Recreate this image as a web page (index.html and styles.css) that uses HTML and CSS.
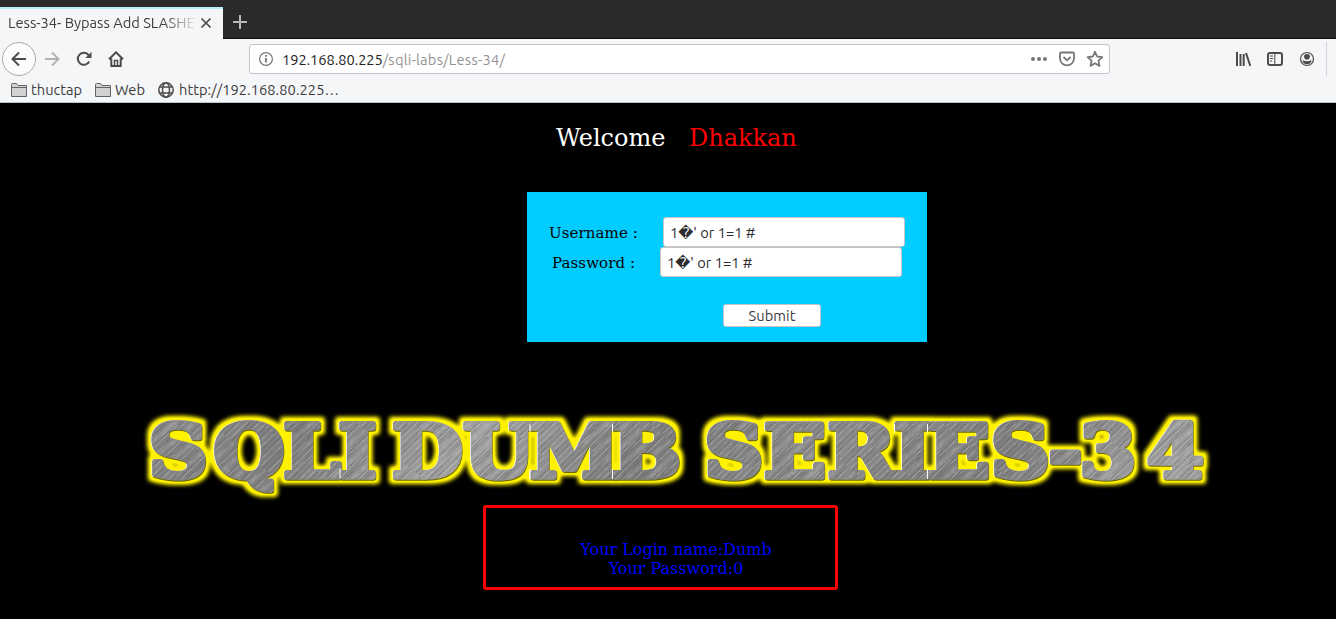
FILE: index.html
```html
<!DOCTYPE html>
<html lang="en">
<head>
<meta charset="utf-8">
<title>Less-34- Bypass Add SLASHES</title>
<link rel="stylesheet" href="styles.css">
</head>
<body>
<header class="browser">
  <div class="tabs">
    <div class="tab"><span class="tab-title">Less-34- Bypass Add SLASHE</span>
      <svg class="close" width="12" height="12" viewBox="0 0 12 12"><path d="M1.500 1.500l9 9M10.500 1.500l-9 9" stroke="#4a4a4c" stroke-width="1.700"/></svg>
    </div>
    <svg class="plus" width="16" height="16" viewBox="0 0 16 16"><path d="M8 1v14M1 8h14" stroke="#b9b8b9" stroke-width="2"/></svg>
  </div>
  <div class="toolbar">
    <div class="nav">
      <span class="back"><svg width="16" height="16" viewBox="0 0 16 16"><path d="M15 8H2M8 1.500L1.500 8 8 14.500" class="line"/></svg></span>
      <svg class="forward" width="16" height="16" viewBox="0 0 16 16"><path d="M1 8h13M8 1.500L14.500 8 8 14.500" class="line"/></svg>
      <svg class="reload" width="16" height="16" viewBox="0 0 16 16"><path d="M13.200 10.500A6 6 0 1 1 12.600 4.200" class="line"/><path d="M15.500 0.800V7H9.300z" fill="#4c4c4e"/></svg>
      <svg class="home" width="16" height="16" viewBox="0 0 16 16"><path d="M1 8.300L8 1.300l7 7M3.300 7.500V15h9.400V7.500" class="line"/><path d="M6.500 14.500V9.500h3v5" fill="none" stroke="#4c4c4e" stroke-width="1.500"/></svg>
    </div>
    <div class="address">
      <svg width="16" height="16" viewBox="0 0 16 16"><circle cx="8" cy="8" r="6.400" fill="none" stroke="#77777a" stroke-width="1.200"/><path d="M8 7v4.500M8 4v1.700" stroke="#77777a" stroke-width="1.800"/></svg>
      <span class="url"><span class="host">192.168.80.225</span>/sqli-labs/Less-34/</span>
      <svg class="dots" width="18" height="16" viewBox="0 0 18 16" fill="#77777a"><circle cx="3" cy="8" r="2"/><circle cx="9" cy="8" r="2"/><circle cx="15" cy="8" r="2"/></svg>
      <svg class="pocket" width="16" height="16" viewBox="0 0 16 16"><path d="M2.200 1.500h11.600q1.200 0 1.200 1.200V7.500a7 6.800 0 0 1-14 0V2.700q0-1.200 1.200-1.200z" class="soft"/><path d="M4.500 6L8 9.300 11.500 6" class="soft"/></svg>
      <svg width="18" height="18" viewBox="0 0 18 18"><path d="M9 1.800l2.100 4.700 5.200.6-3.900 3.500 1.100 5.300L9 13.200l-4.500 2.700 1.100-5.300L1.700 7.100l5.200-.6z" class="soft"/></svg>
    </div>
    <div class="tools">
      <svg width="16" height="16" viewBox="0 0 16 16"><path d="M2 1v14M5.500 3v12M8.700 3v12M11 2l4.300 13" class="line"/></svg>
      <svg width="16" height="16" viewBox="0 0 16 16"><rect x="1" y="2" width="14" height="12" rx="2" class="line"/><path d="M7.800 2v12" stroke="#4c4c4e"/><path d="M3 5h3M3 7.500h3M3 10h2" stroke="#4c4c4e" stroke-width="1.200"/></svg>
      <svg width="16" height="16" viewBox="0 0 16 16"><circle cx="8" cy="8" r="6.500" fill="none" stroke="#4c4c4e" stroke-width="1.200"/><path d="M8 2.900a3 3 0 0 1 3 3.200Q10.700 8.600 8 8.800 5.300 8.600 5 6.100a3 3 0 0 1 3-3.200zM3.500 9Q5.700 10.200 8 10.200t4.500-1.200Q12 13.300 8 13.300T3.500 9z" fill="#4c4c4e"/></svg>
      <span class="divider"></span>
    </div>
  </div>
  <nav class="bookmarks">
    <span class="bookmark b1"><svg width="18" height="16" viewBox="0 0 18 16"><path d="M1.500 2.500q0-1 1-1h4l1.500 2h8.500v11h-15zM1.500 5.500h15" fill="#d2d2d4" stroke="#656567"/></svg><span>thuctap</span></span>
    <span class="bookmark b2"><svg width="18" height="16" viewBox="0 0 18 16"><path d="M1.500 2.500q0-1 1-1h4l1.500 2h8.500v11h-15zM1.500 5.500h15" fill="#d2d2d4" stroke="#656567"/></svg><span>Web</span></span>
    <span class="bookmark b3"><svg width="18" height="16" viewBox="0 0 18 16"><g fill="none" stroke="#4c4c4e" stroke-width="1.500"><circle cx="9" cy="8" r="7.200"/><ellipse cx="9" cy="8" rx="3.500" ry="7.200"/><path d="M2.600 5h12.800M2.600 11h12.800"/></g></svg><span>http://192.168.80.225…</span></span>
  </nav>
</header>
<main>
  <h1>Welcome<span>Dhakkan</span></h1>
  <form class="login">
    <label class="row user"><span>Username :</span><span class="field">1<i>�</i>' or 1=1 #</span></label>
    <label class="row pass"><span>Password :</span><span class="field">1<i>�</i>' or 1=1 #</span></label>
    <button type="button">Submit</button>
  </form>
  <svg class="banner" width="1100" height="100" viewBox="130 405 1100 100">
    <defs>
      <linearGradient id="metal" gradientUnits="userSpaceOnUse" x1="130" y1="400" x2="330" y2="560" spreadMethod="reflect">
        <stop offset="0" stop-color="#8a8a8a"/><stop offset=".5" stop-color="#7e7e7e"/><stop offset="1" stop-color="#a0a0a0"/>
      </linearGradient>
      <pattern id="brush" width="13" height="90" patternUnits="userSpaceOnUse" patternTransform="rotate(43)">
        <path d="M1 0v40M4 22v68M7 0v28M9 45v45M12 10v50" stroke="#fff" stroke-opacity=".2" stroke-width=".8"/>
        <path d="M2.500 30v60M5.500 0v55M8 20v40M11 55v35" stroke="#333" stroke-opacity=".22" stroke-width=".8"/>
      </pattern>
      <filter id="glow" filterUnits="userSpaceOnUse" x="130" y="400" width="1100" height="110">
        <feMorphology operator="dilate" radius="4"/><feGaussianBlur stdDeviation="2.200"/>
        <feComponentTransfer><feFuncA type="linear" slope="1.200"/></feComponentTransfer>
      </filter>
      <text id="words" class="letters" y="477.500" transform="scale(1.110 1)" x="134.300 192.600 255.500 305 353.500 417.500 477.300 551.600 634.800 688.200 745.700 805.200 836 892.800 944.500 972.700 1033.500">SQLIDUMBSERIES-34</text>
    </defs>
    <g filter="url(#glow)"><use href="#words" fill="#fff200" stroke="#fff200"/></g>
    <use href="#words" x="-.7" y="-.7" fill="#fff" stroke="#fff"/>
    <use href="#words" x=".5" y=".5" fill="#6d6700" stroke="#6d6700"/>
    <use href="#words" fill="url(#metal)" stroke="url(#metal)"/>
    <use href="#words" fill="url(#brush)" stroke="url(#brush)"/>
    <path d="M340 468.500V478M530 424v8.500M530 469v10M612.500 424v8.500M612.500 469v10M894.500 424v8.500M927.500 424v8.500M927.500 469v10" stroke="#fff" stroke-width="1"/>
  </svg>
  <section class="result"><p>Your Login name:Dumb<br>Your Password:0</p></section>
</main>
</body>
</html>
```
FILE: styles.css
```css
* { box-sizing: border-box; }
body { margin: 0; width: 1336px; height: 619px; overflow: hidden; background: #000; font-family: "DejaVu Serif", serif; }
svg { display: block; flex: none; }
.browser { height: 103px; background: #f5f6f7; border-bottom: 1px solid #b9c3c8; color: #3c3c3e; font: 14.667px/20px Ubuntu, "Noto Sans", sans-serif; }
.tabs { display: flex; height: 39px; padding-top: 7px; background: #2b292a; border-bottom: 1px solid #131213; }
.tab { display: flex; align-items: center; width: 223px; height: 32px; padding: 0 0 2px 8px; background: #f5f6f7; border-top: 2px solid #b5ebff; }
.tab-title { width: 188px; white-space: nowrap; -webkit-mask-image: linear-gradient(90deg, #000 155px, transparent 190px); mask-image: linear-gradient(90deg, #000 155px, transparent 190px); }
.close { margin-left: 4px; }
.plus { margin: 7px 0 0 9px; }
.toolbar { display: flex; align-items: center; height: 40px; }
.nav { display: flex; align-items: center; width: 249px; padding-left: 2px; }
.back { display: grid; place-items: center; width: 34px; height: 34px; border: 1px solid #aaaaac; border-radius: 50%; background: #fcfcfd; }
.forward { margin-left: 8px; opacity: .4; }
.reload, .home { margin-left: 16px; }
.line { fill: none; stroke: #4c4c4e; stroke-width: 2; }
.soft { fill: none; stroke: #77777a; stroke-width: 1.8; stroke-linejoin: round; }
.address { display: flex; align-items: center; width: 861px; height: 30px; padding: 0 5px 0 8px; border: 1px solid #c1c4c9; border-radius: 3px; background: #fff; }
.url { flex: 1; margin-left: 8px; padding-top: 1px; color: #929294; letter-spacing: .22px; }
.host { color: #222224; letter-spacing: -.07px; }
.dots { margin-right: 11px; }
.pocket { margin-right: 11px; }
.tools { display: flex; align-items: center; gap: 16px; margin-left: 125px; }
.divider { width: 1px; height: 34px; margin-left: -5px; background: #d2d4d7; }
.bookmarks { display: flex; align-items: center; height: 22px; padding-left: 10px; }
.bookmark { display: flex; align-items: center; gap: 3px; white-space: nowrap; }
.b1 { width: 84px; }
.b2 { width: 63px; }
.b3 { gap: 4px; letter-spacing: .04px; }
h1 { margin: 21px 0 0 556px; font-size: 24px; line-height: 28px; font-weight: 400; color: #fff; }
h1 span { margin-left: 23.5px; color: #f00; }
.login { width: 400px; height: 150px; margin: 40px 0 0 527px; padding-top: 25px; background: #0cf; font-size: 15px; color: #000; }
.row { display: flex; align-items: center; height: 30px; }
.user { padding-left: 22px; }
.pass { padding-left: 25px; }
.row > span:first-child { width: 114px; padding-top: 2px; letter-spacing: .1px; }
.pass > span:first-child { width: 108px; }
.field { width: 242px; height: 30px; padding: 4px 6px; border: 1px solid #c5c5c8; border-radius: 3px; background: #fff; color: #2c2c2e; font: 14.667px/22px Ubuntu, "Noto Sans", sans-serif; }
.field i { font: 14.667px/20px "DejaVu Sans", sans-serif; }
button { display: block; width: 98px; height: 23px; margin: 27px 0 0 196px; padding: 0; border: 1px solid #c5c5c8; border-radius: 3px; background: #fff; color: #3c3c3e; font: 14.667px/20px Ubuntu, "Noto Sans", sans-serif; letter-spacing: .1px; }
.banner { margin: 63px 0 0 130px; }
.letters { font: 700 73px "DejaVu Serif", serif; stroke-width: 5.5px; stroke-linejoin: round; }
.result { width: 355px; height: 85px; margin: 0 0 0 483px; padding-top: 32px; border: 3px solid #f00; border-radius: 3px; color: #00f; }
.result p { margin: 0 0 0 31px; text-align: center; font-size: 16px; line-height: 19px; }
```
